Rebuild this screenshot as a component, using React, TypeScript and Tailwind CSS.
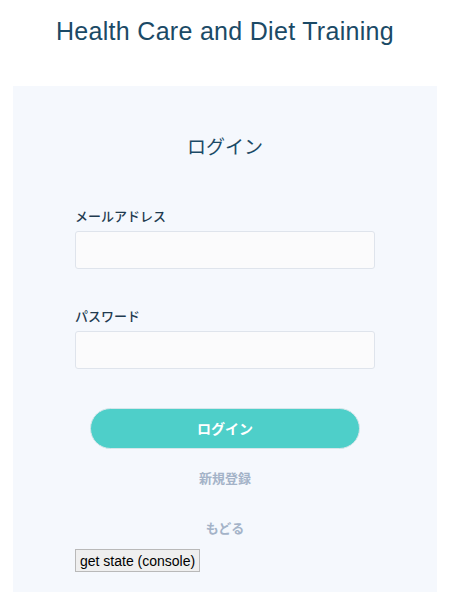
import React from "react";

export default function App() {
  const jp = { fontFamily: '"Noto Sans CJK JP", "Noto Sans", sans-serif' };
  return (
    <div className="w-[450px] h-[592px] bg-white overflow-hidden" style={jp}>
      <h1
        className="pt-[17px] h-[86px] text-center text-[25px] leading-[28px] tracking-[0.3px] text-[#1b4a66]"
        style={{ fontFamily: '"Liberation Sans", Arial, sans-serif' }}
      >
        Health Care and Diet Training
      </h1>
      <div className="mx-[13px] w-[424px] h-[506px] bg-[#f5f8fd] pt-[46px]">
        <h2 className="text-center text-[19px] leading-[28px] text-[#1b4a66]">ログイン</h2>
        <div className="mt-[47px] px-[62px]">
          <label className="block text-[13px] leading-[18px] font-medium text-[#1f3b50]">メールアドレス</label>
          <input className="mt-[6px] block w-[300px] h-[38px] rounded-[3px] border border-[#dfe4ec] bg-[#fbfbfc]" />
          <label className="mt-[38px] block text-[13px] leading-[18px] font-medium text-[#1f3b50]">パスワード</label>
          <input type="password" className="mt-[6px] block w-[300px] h-[38px] rounded-[3px] border border-[#dfe4ec] bg-[#fbfbfc]" />
        </div>
        <div className="mt-[39px] flex justify-center">
          <button className="w-[270px] h-[41px] rounded-full bg-[#4ecfc9] border border-[#d6e6ea] text-white text-[14px] font-bold">
            ログイン
          </button>
        </div>
        <div className="mt-[20px] text-center text-[13px] leading-[18px] font-bold text-[#a4b3c8]">新規登録</div>
        <div className="mt-[32px] text-center text-[13px] leading-[18px] font-bold text-[#a4b3c8]">もどる</div>
        <div className="mt-[12px] px-[62px] flex">
          <button
            className="h-[23px] px-[4px] border border-[#b9b9b9] bg-[#efefef] text-[14px] text-black leading-none"
            style={{ fontFamily: '"Liberation Sans", Arial, sans-serif' }}
          >
            get state (console)
          </button>
        </div>
      </div>
    </div>
  );
}
